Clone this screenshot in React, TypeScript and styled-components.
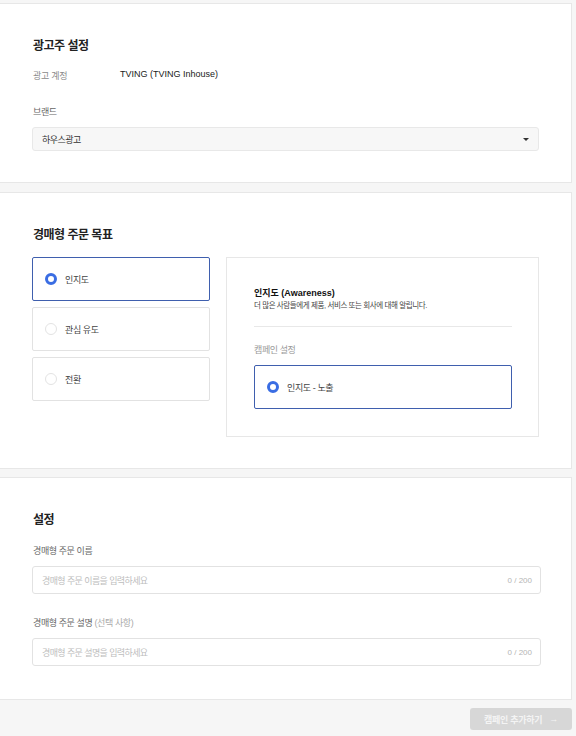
import React from "react";
import styled, { createGlobalStyle } from "styled-components";

const GlobalStyle = createGlobalStyle`
  html, body {
    margin: 0;
    padding: 0;
    background: #f6f6f6;
  }
  body {
    font-family: "Liberation Sans", "Noto Sans CJK KR", sans-serif;
    color: #222;
    -webkit-font-smoothing: antialiased;
  }
  * { box-sizing: border-box; }
`;

const Page = styled.div`
  width: 576px;
  min-height: 736px;
  padding: 3px 4px 0 0;
  display: flex;
  flex-direction: column;
  overflow: hidden;
`;

const Card = styled.section<{ $gap?: number; $bottom?: number }>`
  margin-left: -1px;
  margin-top: ${(p) => p.$gap ?? 0}px;
  background: #fff;
  border: 1px solid #e7e7e7;
  padding: 33px 32px ${(p) => p.$bottom ?? 31}px 32px;
  display: flex;
  flex-direction: column;
`;

const Title = styled.h2`
  margin: 0 0 0 1px;
  font-size: 12px;
  letter-spacing: -0.5px;
  line-height: 18px;
  font-weight: 700;
  color: #222;
`;

const InfoRow = styled.div`
  margin-top: 13px;
  margin-left: 1px;
  display: flex;
  align-items: center;
  height: 14px;
`;

const InfoLabel = styled.span`
  width: 87px;
  font-size: 9px;
  letter-spacing: -0.3px;
  color: #8a8a8a;
  line-height: 14px;
  padding-top: 2px;
`;

const InfoValue = styled.span`
  font-size: 9px;
  color: #222;
  line-height: 14px;
  margin-top: -2px;
`;

const FieldLabel = styled.div<{ $top: number }>`
  margin-top: ${(p) => p.$top}px;
  margin-left: 1px;
  font-size: 9px;
  letter-spacing: -0.4px;
  line-height: 14px;
  color: #666;
`;

const Optional = styled.span`
  color: #aaa;
`;

const Select = styled.div`
  margin-top: 8px;
  height: 24px;
  background: #f7f7f7;
  border: 1px solid #e8e8e8;
  border-radius: 3px;
  display: flex;
  align-items: center;
  justify-content: space-between;
  padding: 0 9px 0 9px;
  font-size: 9px;
  letter-spacing: -0.5px;
  color: #333;
`;

const Caret = styled.span`
  width: 0;
  height: 0;
  border-left: 3px solid transparent;
  border-right: 3px solid transparent;
  border-top: 3px solid #333;
  margin-top: 1px;
`;

const GoalGrid = styled.div`
  margin-top: 13px;
  display: grid;
  grid-template-columns: 178px 313px;
  column-gap: 16px;
  align-items: start;
`;

const OptionList = styled.div`
  display: flex;
  flex-direction: column;
  gap: 6px;
`;

const OptionBox = styled.div<{ $active?: boolean }>`
  height: 44px;
  border: 1px solid ${(p) => (p.$active ? "#3f5fae" : "#e2e2e2")};
  border-radius: 2px;
  background: #fff;
  display: flex;
  align-items: center;
  padding-left: 12px;
  gap: 8px;
  font-size: 9px;
  letter-spacing: -0.4px;
  color: #444;
`;

const Radio = styled.span<{ $on?: boolean }>`
  width: 12px;
  height: 12px;
  border-radius: 50%;
  flex: none;
  background: #fff;
  border: ${(p) => (p.$on ? "3px solid #3a6de3" : "1px solid #e3e3e3")};
`;

const Panel = styled.div`
  border: 1px solid #e7e7e7;
  background: #fff;
  padding: 29px 26px 27px 27px;
  display: flex;
  flex-direction: column;
`;

const PanelTitle = styled.div`
  font-size: 9px;
  font-weight: 700;
  line-height: 13px;
  color: #111;
`;

const PanelDesc = styled.div`
  font-size: 7.5px;
  letter-spacing: -0.4px;
  line-height: 11px;
  color: #444;
`;

const Divider = styled.hr`
  margin: 15px 0 0;
  border: none;
  border-top: 1px solid #e8e8e8;
  height: 0;
`;

const SubLabel = styled.div`
  margin-top: 16px;
  font-size: 9px;
  letter-spacing: -0.4px;
  line-height: 14px;
  color: #999;
`;

const SubOptionWrap = styled.div`
  margin-top: 8px;
`;

const InputBox = styled.div`
  margin-top: 8px;
  margin-right: -2px;
  height: 28px;
  border: 1px solid #e2e2e2;
  border-radius: 3px;
  background: #fff;
  display: flex;
  align-items: center;
  justify-content: space-between;
  padding: 0 8px 0 9px;
`;

const Placeholder = styled.span`
  font-size: 9px;
  letter-spacing: -0.6px;
  color: #bdbdbd;
`;

const Counter = styled.span`
  font-size: 8px;
  color: #b5b5b5;
`;

const Footer = styled.div`
  display: flex;
  justify-content: flex-end;
  margin-top: 8px;
`;

const AddButton = styled.button`
  width: 102px;
  height: 22px;
  border: none;
  border-radius: 3px;
  background: #d7d7d7;
  color: #f4f4f4;
  font-family: "Liberation Sans", "Noto Sans CJK KR", sans-serif;
  font-size: 9px;
  font-weight: 700;
  letter-spacing: -0.3px;
  display: flex;
  align-items: center;
  justify-content: center;
  gap: 7px;
  padding: 0;
`;

const Arrow = styled.span`
  font-weight: 400;
  font-size: 9px;
`;

export default function App() {
  return (
    <>
      <GlobalStyle />
      <Page>
        <Card>
          <Title>광고주 설정</Title>
          <InfoRow>
            <InfoLabel>광고 계정</InfoLabel>
            <InfoValue>TVING (TVING Inhouse)</InfoValue>
          </InfoRow>
          <FieldLabel $top={23}>브랜드</FieldLabel>
          <Select>
            <span>하우스광고</span>
            <Caret />
          </Select>
        </Card>

        <Card $gap={9}>
          <Title>경매형 주문 목표</Title>
          <GoalGrid>
            <OptionList>
              <OptionBox $active>
                <Radio $on />
                인지도
              </OptionBox>
              <OptionBox>
                <Radio />
                관심 유도
              </OptionBox>
              <OptionBox>
                <Radio />
                전환
              </OptionBox>
            </OptionList>
            <Panel>
              <PanelTitle>인지도 (Awareness)</PanelTitle>
              <PanelDesc>더 많은 사람들에게 제품, 서비스 또는 회사에 대해 알립니다.</PanelDesc>
              <Divider />
              <SubLabel>캠페인 설정</SubLabel>
              <SubOptionWrap>
                <OptionBox $active>
                  <Radio $on />
                  인지도 - 노출
                </OptionBox>
              </SubOptionWrap>
            </Panel>
          </GoalGrid>
        </Card>

        <Card $gap={8} $bottom={33}>
          <Title>설정</Title>
          <FieldLabel $top={15}>경매형 주문 이름</FieldLabel>
          <InputBox>
            <Placeholder>경매형 주문 이름을 입력하세요</Placeholder>
            <Counter>0 / 200</Counter>
          </InputBox>
          <FieldLabel $top={22}>
            경매형 주문 설명 <Optional>(선택 사항)</Optional>
          </FieldLabel>
          <InputBox>
            <Placeholder>경매형 주문 설명을 입력하세요</Placeholder>
            <Counter>0 / 200</Counter>
          </InputBox>
        </Card>

        <Footer>
          <AddButton>
            캠페인 추가하기 <Arrow>→</Arrow>
          </AddButton>
        </Footer>
      </Page>
    </>
  );
}
